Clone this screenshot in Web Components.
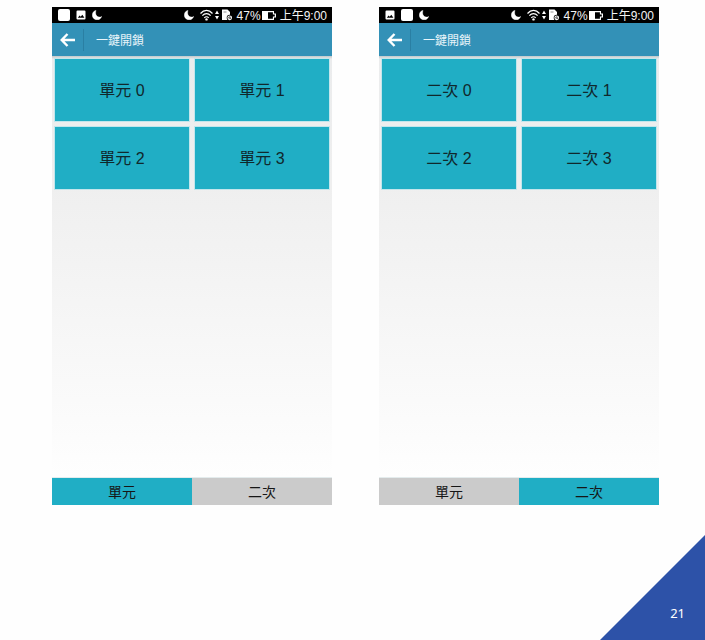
<!DOCTYPE html>
<html lang="zh-Hant">
<head>
<meta charset="utf-8">
<meta name="viewport" content="width=device-width, initial-scale=1">
<title>一鍵開鎖</title>
<style>
  body { margin: 0; background: #fefefe; font-family: "Liberation Sans", "Noto Sans CJK TC", sans-serif; }
</style>
</head>
<body>
<slide-page number="21">
  <phone-screen>
    <status-bar slot="status" time="上午9:00" battery="47%">
      <status-icon name="app"></status-icon>
      <status-icon name="picture"></status-icon>
      <status-icon name="moon"></status-icon>
    </status-bar>
    <title-bar slot="title">一鍵開鎖</title-bar>
    <unit-tile>單元 0</unit-tile>
    <unit-tile>單元 1</unit-tile>
    <unit-tile>單元 2</unit-tile>
    <unit-tile>單元 3</unit-tile>
    <tab-item slot="tabs" active>單元</tab-item>
    <tab-item slot="tabs">二次</tab-item>
  </phone-screen>
  <phone-screen>
    <status-bar slot="status" time="上午9:00" battery="47%">
      <status-icon name="picture"></status-icon>
      <status-icon name="app"></status-icon>
      <status-icon name="moon"></status-icon>
    </status-bar>
    <title-bar slot="title">一鍵開鎖</title-bar>
    <unit-tile>二次 0</unit-tile>
    <unit-tile>二次 1</unit-tile>
    <unit-tile>二次 2</unit-tile>
    <unit-tile>二次 3</unit-tile>
    <tab-item slot="tabs">單元</tab-item>
    <tab-item slot="tabs" active>二次</tab-item>
  </phone-screen>
</slide-page>

<script>
class BaseElement extends HTMLElement {
  connectedCallback() {
    if (this.shadowRoot) return;
    this.attachShadow({ mode: 'open' }).innerHTML = this.render();
  }
}

customElements.define('slide-page', class extends BaseElement {
  render() {
    return `
      <style>
        :host { display: block; position: relative; min-height: 100vh; box-sizing: border-box; padding: 7px 46px 40px 52px; }
        main { display: grid; grid-template-columns: 1fr 1fr; gap: 47px; align-items: start; }
        .corner {
          position: absolute; right: 0; bottom: 0; width: 105px; height: 105px; box-sizing: border-box;
          display: flex; justify-content: flex-end; align-items: flex-end; padding: 0 20px 17px 0;
          background: #2d52a8; clip-path: polygon(100% 0, 100% 100%, 0 100%);
          color: #fff; font: 13px/20px "Noto Sans", "Open Sans", sans-serif;
        }
      </style>
      <main><slot></slot></main>
      <div class="corner">${this.getAttribute('number')}</div>`;
  }
});

customElements.define('phone-screen', class extends BaseElement {
  render() {
    return `
      <style>
        :host { display: flex; flex-direction: column; aspect-ratio: 9 / 16; min-width: 0; }
        .body { flex: 1; padding: 3px; background: linear-gradient(#bfc8cb, #ebeced 3px, #efefef 120px, #efefef 130px, #fefefe); }
        .grid { display: grid; grid-template-columns: 1fr 1fr; grid-auto-rows: minmax(62px, auto); gap: 6px; }
        nav { display: flex; border-top: 1px solid #e4eced; }
      </style>
      <slot name="status"></slot>
      <slot name="title"></slot>
      <section class="body"><div class="grid"><slot></slot></div></section>
      <nav><slot name="tabs"></slot></nav>`;
  }
});

customElements.define('status-bar', class extends BaseElement {
  render() {
    return `
      <style>
        :host { display: flex; align-items: center; height: 16px; padding: 0 5px 0 6px; background: #000; color: #f4f4f4;
          font: 12px/16px "Liberation Sans", "Noto Sans CJK TC", sans-serif; white-space: nowrap; }
        .left { display: flex; align-items: center; gap: 6px; flex: 1; }
        .right { display: flex; align-items: center; gap: 4px; }
        .signal { display: flex; align-items: center; gap: 2px; margin-left: 2px; }
        .power { display: flex; align-items: center; gap: 1px; }
        span { padding-top: 2px; }
      </style>
      <div class="left"><slot></slot></div>
      <div class="right">
        <status-icon name="moon"></status-icon>
        <div class="signal">
          <status-icon name="wifi"></status-icon>
          <status-icon name="arrows"></status-icon>
          <status-icon name="sim"></status-icon>
        </div>
        <div class="power"><span>${this.getAttribute('battery')}</span><status-icon name="battery"></status-icon></div>
        <span>${this.getAttribute('time')}</span>
      </div>`;
  }
});

const ICONS = {
  app: [12, 12, '<rect width="12" height="12" rx="2"/>'],
  picture: [10, 10, '<path fill-rule="evenodd" d="M1.500 .5h7a1 1 0 0 1 1 1v7a1 1 0 0 1-1 1h-7a1 1 0 0 1-1-1v-7a1 1 0 0 1 1-1zM1.800 7.800h6.600L6.300 4.800 4.700 6.800 3.600 5.600z"/>'],
  moon: [10, 10, '<path d="M4 .4C1.800 .8 .3 2.700 .3 5c0 2.700 2.100 4.800 4.800 4.800 2.200 0 4-1.400 4.600-3.400-.7.500-1.400.700-2.200.700C5.300 7.100 3.600 5.400 3.600 3.100 3.600 2 3.700 1.200 4 .4z" stroke="#fff" stroke-width=".4"/>'],
  wifi: [13, 12, '<g fill="none" stroke="#fff" stroke-width="1.200"><path d="M.5 4.500C4 .4 9 .4 12.500 4.500M2.400 6.700c2.300-2.700 5.900-2.700 8.200 0M4.300 8.800c1.300-1.400 3.100-1.400 4.400 0"/></g><circle cx="6.500" cy="10.400" r="1.200"/>'],
  arrows: [4, 12, '<path d="M2 1.500 4 5H0zM2 10.500 4 7H0z"/>'],
  sim: [12, 12, '<path d="M1 .5h5.500L9 3V11H1z"/><path d="M2.500 3h3" stroke="#777" stroke-width=".8"/><circle cx="8.700" cy="8.800" r="3" fill="#000"/><circle cx="8.700" cy="8.800" r="1.800" fill="none" stroke="#fff" stroke-width="1.100"/><path d="m7.500 10 2.400-2.400" stroke="#fff"/>'],
  battery: [14, 11, '<path fill-rule="evenodd" d="M0 1h12v2.500h2v4h-2V10H0zM6 2.200v6.600h4.900V6.500h1.900v-2h-1.900V2.200z"/>']
};

customElements.define('status-icon', class extends BaseElement {
  render() {
    const [w, h, shape] = ICONS[this.getAttribute('name')];
    return `
      <style>:host { display: block; flex: none; } svg { display: block; }</style>
      <svg width="${w}" height="${h}" viewBox="0 0 ${w} ${h}" fill="#fff" aria-hidden="true">${shape}</svg>`;
  }
});

customElements.define('title-bar', class extends BaseElement {
  render() {
    return `
      <style>
        :host { display: flex; align-items: center; height: 33px; background: #3391b7; color: #e9f5fa; }
        button { width: 32px; height: 22px; padding: 0 0 0 8px; border: 0; border-right: 1px solid #2a7fa3; background: none; }
        svg { display: block; }
        h1 { margin: 0; padding-left: 12px; font: 12px/20px "Noto Sans CJK TC", sans-serif; }
      </style>
      <button type="button" aria-label="返回">
        <svg width="16" height="14" viewBox="0 0 16 14" fill="none" stroke="#fff" stroke-width="2.400"><path d="M15 7H2M7.500 1 1.700 7l5.800 6"/></svg>
      </button>
      <h1><slot></slot></h1>`;
  }
});

customElements.define('unit-tile', class extends BaseElement {
  render() {
    return `
      <style>
        :host { display: grid; }
        button { border: 0; padding: 6px 4px 4px; background: #20aec5; box-shadow: 0 0 0 1px #c3e6ec; color: #10282c;
          font: 16px/24px "Liberation Sans", "Noto Sans CJK TC", sans-serif; }
      </style>
      <button type="button"><slot></slot></button>`;
  }
});

customElements.define('tab-item', class extends BaseElement {
  render() {
    const active = this.hasAttribute('active');
    return `
      <style>
        :host { display: grid; flex: 1; }
        button { border: 0; height: 27px; padding: 0; background: #cbcbcb; color: #161616;
          font: 14px/20px "Noto Sans CJK TC", sans-serif; }
        button[aria-pressed="true"] { background: #20aec5; }
      </style>
      <button type="button" aria-pressed="${active}"><slot></slot></button>`;
  }
});
</script>
</body>
</html>
